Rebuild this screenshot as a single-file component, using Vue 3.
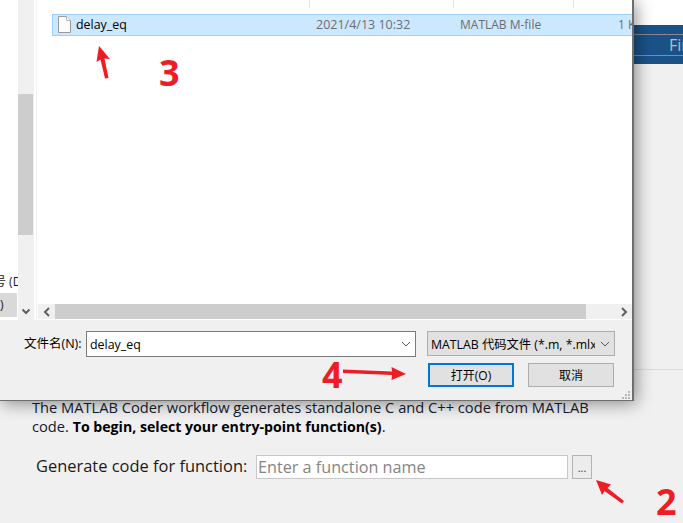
<template>
  <div class="page">
    <div class="app-top"></div>
    <div class="app-band">
      <span class="band-tab">Fin</span>
    </div>
    <div class="app-rule"></div>
    <div class="app-body">
      <p class="intro">
        The MATLAB Coder workflow generates standalone C and C++ code from MATLAB
        code. <b>To begin, select your entry-point function(s)</b>.
      </p>
      <div class="func-row">
        <label class="func-label" for="func">Generate code for function:</label>
        <input id="func" class="func-input" type="text" placeholder="Enter a function name" />
        <button class="func-browse">...</button>
      </div>
    </div>

    <div class="dialog">
      <div class="browser">
        <div class="nav">
          <div class="nav-item">号 (D</div>
          <div class="nav-item selected">)</div>
        </div>
        <div class="vscroll">
          <div class="vthumb"></div>
          <svg class="chev-down" width="10" height="8" viewBox="0 0 10 8">
            <path d="M1.5 1.5 5 5l3.5-3.5" fill="none" stroke="#606060" stroke-width="2" />
          </svg>
        </div>
        <div class="list">
          <div class="list-head">
            <span class="col-name"></span>
            <span class="col-date"></span>
            <span class="col-type"></span>
          </div>
          <div class="file-row">
            <div class="col-name">
              <svg class="file-icon" width="13" height="17" viewBox="0 0 13 17">
                <path d="M.5.5h8l4 4v12H.5z" fill="#fbfbfb" stroke="#9a9a9a" />
                <path d="M8.5.5v4h4" fill="#fff" stroke="#b5b5b5" />
              </svg>
              <span>{{ file.name }}</span>
            </div>
            <div class="col-date">{{ file.date }}</div>
            <div class="col-type">{{ file.type }}</div>
            <div class="col-size">{{ file.size }}</div>
          </div>
          <div class="hscroll">
            <div class="hbtn">
              <svg width="8" height="10" viewBox="0 0 8 10">
                <path d="M6 1 2 5l4 4" fill="none" stroke="#606060" stroke-width="2" />
              </svg>
            </div>
            <div class="hthumb"></div>
            <div class="htrack"></div>
            <div class="hbtn">
              <svg width="8" height="10" viewBox="0 0 8 10">
                <path d="M2 1l4 4-4 4" fill="none" stroke="#606060" stroke-width="2" />
              </svg>
            </div>
          </div>
        </div>
      </div>
      <div class="footer">
        <div class="name-row">
          <label class="name-label">文件名(N):</label>
          <div class="name-combo">
            <span>delay_eq</span>
            <svg width="10" height="6" viewBox="0 0 10 6">
              <path d="M1 1l4 4 4-4" fill="none" stroke="#555" stroke-width="1" />
            </svg>
          </div>
          <div class="filter">
            <span class="filter-text">MATLAB 代码文件 (*.m, *.mlx)</span>
            <svg width="10" height="6" viewBox="0 0 10 6">
              <path d="M1 1l4 4 4-4" fill="none" stroke="#555" stroke-width="1" />
            </svg>
          </div>
        </div>
        <div class="btn-row">
          <button class="btn primary">打开(O)</button>
          <button class="btn">取消</button>
        </div>
        <svg class="grip" width="9" height="9" viewBox="0 0 9 9" fill="#b8b8b8">
          <rect x="6" y="0" width="2" height="2" />
          <rect x="3" y="3" width="2" height="2" />
          <rect x="6" y="3" width="2" height="2" />
          <rect x="0" y="6" width="2" height="2" />
          <rect x="3" y="6" width="2" height="2" />
          <rect x="6" y="6" width="2" height="2" />
        </svg>
      </div>
    </div>

    <svg class="arrows" width="683" height="523" viewBox="0 0 683 523">
      <g fill="#ee1c25">
        <path d="M99 46 110 59 104.500 58.500 108.500 78 105 78.500 100.500 59.500 96.500 62z" />
        <path d="M343 369.500 392 371.500 391.500 367 406 374 391.500 380 392 375 343 373z" />
        <path d="M596 480 611 484.500 607.500 488 624 501 622 503.500 604.500 491 602 495z" />
      </g>
    </svg>
    <span class="mark mark-3">3</span>
    <span class="mark mark-4">4</span>
    <span class="mark mark-2">2</span>
  </div>
</template>

<script setup>
const file = {
  name: "delay_eq",
  date: "2021/4/13 10:32",
  type: "MATLAB M-file",
  size: "1 KB",
};
</script>

<style>
html,
body {
  margin: 0;
  background: #f0f0f0;
}
</style>

<style scoped>
.page {
  position: relative;
  width: 683px;
  height: 523px;
  overflow: hidden;
  background: #f0f0f0;
  font-family: "Open Sans", "Noto Sans CJK SC", sans-serif;
  color: #1a1a1a;
}

.app-top {
  height: 25px;
  background: #fff;
}

.app-band {
  height: 39px;
  padding-top: 9px;
  box-sizing: border-box;
  background: #1a5288;
}

.band-tab {
  display: block;
  height: 22px;
  padding-left: 669px;
  border-top: 1px solid #8a8a8a;
  border-bottom: 1px solid #8a8a8a;
  box-sizing: border-box;
  line-height: 20px;
  font-size: 16px;
  color: #b4bcc8;
  white-space: nowrap;
}

.app-rule {
  height: 1px;
  margin-top: 305px;
  background: #dcdcdc;
}

.app-body {
  padding: 28px 0 0 32px;
}

.intro {
  width: 590px;
  margin: 0;
  font-size: 14.66px;
  line-height: 19px;
  color: #102030;
}

.intro b {
  font-size: 14.15px;
  color: #000;
}

.func-row {
  display: flex;
  align-items: center;
  margin-top: 19px;
  padding-left: 4px;
}

.func-label {
  width: 220px;
  padding-bottom: 2px;
  font-size: 16.45px;
  line-height: 20px;
  white-space: nowrap;
}

.func-input {
  width: 312px;
  height: 24px;
  padding: 0 1px;
  border: 1px solid #c8c8c8;
  box-sizing: border-box;
  background: #fff;
  font-family: inherit;
  font-size: 16.2px;
  outline: none;
}

.func-input::placeholder {
  color: #858585;
}

.func-browse {
  width: 20px;
  height: 24px;
  margin-left: 4px;
  padding: 0;
  border: 1px solid #b4b4b4;
  background: #ececec;
  font-size: 11px;
  font-family: inherit;
  line-height: 24px;
  color: #333;
}

.dialog {
  position: absolute;
  left: 0;
  top: 0;
  width: 634px;
  height: 401px;
  box-sizing: border-box;
  background: #f0f0f0;
  border-right: 2px solid #6e6e6e;
  border-bottom: 1px solid #6e6e6e;
  box-shadow: 2px 2px 16px rgba(0, 0, 0, 0.45);
  font-size: 12px;
}

.browser {
  display: flex;
  height: 320px;
  background: #fff;
}

.nav {
  display: flex;
  flex-direction: column;
  justify-content: flex-end;
  width: 18px;
  overflow: hidden;
  padding-bottom: 3px;
  box-sizing: border-box;
  white-space: nowrap;
}

.nav-item {
  height: 24px;
  line-height: 26px;
  margin-left: -6px;
}

.nav-item.selected {
  width: 17px;
  margin-left: 0;
  line-height: 24px;
  background: #d9d9d9;
}

.vscroll {
  position: relative;
  width: 16px;
  background: #f0f0f0;
}

.vthumb {
  position: absolute;
  left: 0;
  top: 94px;
  width: 15px;
  height: 141px;
  background: #cdcdcd;
}

.chev-down {
  position: absolute;
  left: 3px;
  top: 308px;
}

.list {
  position: relative;
  flex: 1;
  margin-left: 2px;
  border-left: 1px solid #f0f0f0;
  overflow: hidden;
}

.list-head {
  display: flex;
  height: 8px;
  padding-left: 15px;
}

.list-head span {
  flex: none;
  border-right: 1px solid #e5e5e5;
  box-sizing: border-box;
}

.list-head .col-type {
  width: 120px;
}

.file-row {
  display: flex;
  align-items: center;
  height: 22px;
  margin: 6px 0 0 15px;
  padding: 0 0 2px 5px;
  border: 1px solid #99d1ff;
  border-right: 0;
  box-sizing: border-box;
  background: #cce8ff;
  white-space: nowrap;
  color: #000;
}

.col-name {
  display: flex;
  flex: none;
  align-items: center;
  gap: 5px;
  width: 258px;
}

.col-name span {
  font-size: 12.4px;
}

.col-date {
  flex: none;
  width: 144px;
  font-size: 12.5px;
  color: #6d6d6d;
}

.col-type {
  flex: none;
  width: 158px;
  color: #6d6d6d;
}

.col-size {
  flex: none;
  color: #6d6d6d;
}

.hscroll {
  position: absolute;
  left: 1px;
  right: 0;
  bottom: 1px;
  display: flex;
  height: 15px;
  background: #f0f0f0;
}

.hbtn {
  display: flex;
  align-items: center;
  justify-content: center;
  width: 17px;
}

.hthumb {
  width: 531px;
  background: #cdcdcd;
}

.htrack {
  flex: 1;
}

.footer {
  position: relative;
  height: 80px;
  padding: 11px 17px 0 24px;
  box-sizing: border-box;
}

.name-row {
  display: flex;
  align-items: flex-start;
}

.name-label {
  width: 62px;
  height: 26px;
  line-height: 26px;
  font-size: 12.5px;
  white-space: nowrap;
  color: #000;
}

.name-combo {
  display: flex;
  align-items: center;
  justify-content: space-between;
  width: 330px;
  height: 26px;
  padding: 0 4px 0 3px;
  border: 1px solid #7a7a7a;
  box-sizing: border-box;
  background: #fff;
  font-size: 12.4px;
  color: #000;
}

.filter {
  display: flex;
  align-items: center;
  justify-content: space-between;
  width: 188px;
  height: 25px;
  margin-left: 11px;
  padding: 0 4px 0 3px;
  border: 1px solid #adadad;
  box-sizing: border-box;
  background: #e1e1e1;
  font-size: 12.3px;
  color: #000;
}

.filter-text {
  width: 164px;
  overflow: hidden;
  white-space: nowrap;
}

.btn-row {
  display: flex;
  justify-content: flex-end;
  gap: 14px;
  margin-top: 6px;
  padding-right: 1px;
}

.btn {
  width: 86px;
  height: 24px;
  padding: 0;
  border: 1px solid #adadad;
  background: #e1e1e1;
  font-family: inherit;
  font-size: 12px;
  color: #000;
}

.btn.primary {
  border: 2px solid #0078d7;
}

.grip {
  position: absolute;
  right: 1px;
  bottom: 0;
}

.arrows {
  position: absolute;
  left: 0;
  top: 0;
  pointer-events: none;
}

.mark {
  position: absolute;
  font-family: "Open Sans", sans-serif;
  font-weight: 700;
  font-size: 36px;
  line-height: 36px;
  color: #ee1c25;
}

.mark-3 {
  left: 159px;
  top: 55px;
}

.mark-4 {
  left: 322px;
  top: 357px;
}

.mark-2 {
  left: 656px;
  top: 484px;
}
</style>
